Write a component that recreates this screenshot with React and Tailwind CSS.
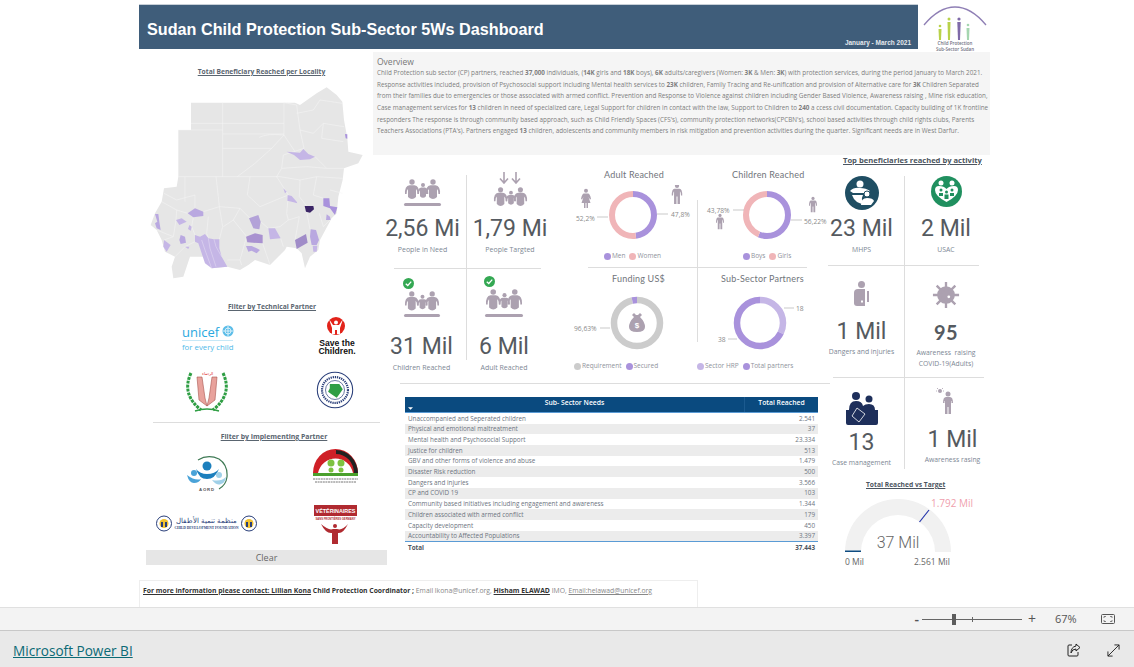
import React from "react";

const PURPLE = "#a992dc";
const LILAC = "#c5b6e6";
const PINK = "#f0b5b8";
const ICON = "#aca1b0";

const mapShapes = [
  ["#c5b6e6", "440,215 480,218 490,207 505,222 525,230 510,238 480,240 462,225"],
  ["#a992dc", "615,162 622,163 622,176 617,175"],
  ["#c5b6e6", "430,325 440,335 435,340"],
  ["#c5b6e6", "443,345 455,348 470,365 472,370 455,365 442,362"],
  ["#3b2566", "494,378 520,378 522,388 510,398 498,395"],
  ["#a992dc", "550,355 568,355 570,378 592,382 585,405 570,385 550,378"],
  ["#b9a8e0", "560,403 570,410 572,420 558,420"],
  ["#b9a8e0", "512,448 528,450 537,480 530,495 515,495 510,470"],
  ["#c5b6e6", "518,497 532,497 530,515 520,515"],
  ["#a08cc8", "465,480 498,462 503,488 470,507"],
  ["#c5b6e6", "385,445 405,445 422,475 390,478"],
  ["#b3a2d8", "327,415 355,405 362,425 358,448 340,445"],
  ["#a992d0", "318,470 345,460 368,465 368,490 322,487"],
  ["#b9a8e0", "318,498 335,498 350,505 360,510 350,520 335,512 325,515"],
  ["#b9a8e0", "165,385 190,395 190,408 160,412 143,400"],
  ["#c5b6e6", "108,420 125,415 140,425 118,435"],
  ["#c5b6e6", "148,435 155,440 152,452 144,447"],
  ["#b9a8e0", "122,465 135,470 138,488 122,492 118,480"],
  ["#c5b6e6", "165,465 180,470 195,462 205,475 222,478 238,478 238,505 245,530 262,560 215,565 195,550 180,505 175,490 165,485"],
  ["#c5b6e6", "135,500 148,500 145,507"],
  ["#c5b6e6", "72,480 92,495 80,515 70,500"],
  ["#b9a8e0", "45,402 55,402 58,425 62,450 50,445 45,430 52,425"],
];

const mapLines = [
  "M153 130H432", "M115 150H248", "M248 68V290", "M248 162H432", "M248 205H395", "M432 68V165",
  "M432 165Q380 160 358 172", "M432 165L395 205L345 250L292 290", "M115 290H420", "M135 290V365",
  "M228 290L235 350L238 380", "M432 165L465 215", "M432 68L470 75L480 150L492 205", "M470 100L520 90L540 60L607 70",
  "M480 150L520 160L550 130L612 140", "M550 130L545 175L610 185", "M492 205L430 225L425 265L410 290",
  "M525 230L560 265L612 265", "M425 265L500 260L560 265", "M410 290L445 345", "M420 290L480 300L530 290L608 295",
  "M330 290L322 345L360 380L420 355L445 345", "M480 300L478 350L500 378", "M530 290L520 345L550 355", "M570 330L608 340",
  "M72 340L110 360L165 345L165 385", "M65 365L110 390L143 400", "M110 390L108 420L100 470L72 480",
  "M190 395L238 380L300 385L330 415", "M238 380L248 440L238 478", "M205 410L200 460L205 475",
  "M160 412L155 440L165 465", "M300 385L280 420L320 470", "M280 420L250 440", "M362 425L385 445L420 440L445 420L478 410",
  "M445 345L440 400L445 420", "M478 410L465 480", "M500 395L510 448", "M422 475L430 500", "M368 490L390 555",
  "M262 540L300 540L320 470", "M300 540L305 555", "M105 530L135 500L165 485", "M50 450L100 470", "M538 400L550 440L590 400",
];

const Map = () => (
  <svg viewBox="0 0 720 660" className="block w-[240px] h-[220px]">
    <path
      fill="#e6e6e6"
      d="M153 68H465L480 75L530 40L560 22L590 45L607 65L612 120L622 175L625 215L668 225L655 250L612 265L608 300L595 350L590 400L575 415L540 480L535 510L510 530L495 565L485 520L470 505L440 500L435 510L390 555L345 540L325 555L300 570L262 560L215 565L190 530L150 530L130 590L100 595L95 560L105 530L75 515L65 480L50 450L32 435L45 400L65 365L72 325L110 320L115 290V150H153Z"
    />
    {mapLines.map((d) => (
      <path key={d} d={d} fill="none" stroke="#f6f6f6" strokeWidth="1.600" />
    ))}
    {mapShapes.map(([fill, points]) => (
      <polygon key={points} fill={fill} points={points} />
    ))}
    <path d="M205 475L210 505L228 560M185 480L195 510L215 565M222 478L228 500L245 530" fill="none" stroke="#f0ecf8" strokeWidth="1.200" />
  </svg>
);

const Person = ({ x, y, s = 1, fill = ICON }) => (
  <g transform={`translate(${x} ${y}) scale(${s})`} fill={fill}>
    <circle cx="0" cy="0" r="2.7" />
    <path d="M-7 12Q-7.5 4-2.5 3.2H2.5Q7.500 4 7 12H5.400Q5.400 8 4 7V15Q2 17 0 17Q-2 17-4 15V7Q-5.400 8-5.400 12Z" />
  </g>
);

const Group = () => (
  <g>
    <Person x={8} y={3} s={1} />
    <Person x={19} y={6} s={0.75} />
    <Person x={29} y={3} s={1} />
  </g>
);

const Check = () => (
  <svg viewBox="0 0 12 12" className="block w-[11px] h-[11px]">
    <circle cx="6" cy="6" r="6" fill="#34a853" />
    <path d="M3 6.200L5.200 8.200L9 4" fill="none" stroke="#ffffff" strokeWidth="1.400" />
  </svg>
);

const PeopleIcon = ({ bar = true, arrows = false, check = false, width = 37 }) => (
  <div className="flex flex-col items-center">
    {check && <div className="self-start -ml-[1px] mb-[2px]"><Check /></div>}
    {arrows && (
      <svg viewBox="0 0 22 12" className="block w-[22px] h-[12px] mb-[3px]">
        <path d="M5 0V10M1 6.500L5 11L9 6.500M17 0V10M13 6.500L17 11L21 6.500" fill="none" stroke={ICON} strokeWidth="1.600" />
      </svg>
    )}
    <svg viewBox="0 0 37 21" style={{ width }} className="block">
      <Group />
    </svg>
    {bar && <div className="h-[3px] mt-[3px] rounded-sm bg-[#aca1b0]" style={{ width }} />}
  </div>
);

const Kpi = ({ value, label, children, top, gap, className = "" }) => (
  <div className={`flex flex-col items-center ${className}`}>
    <div className="shrink-0 flex flex-col justify-end" style={{ height: top }}>{children}</div>
    <div className="shrink-0 font-['Roboto',sans-serif] text-[23px] leading-[30px] text-[#555a60] whitespace-nowrap" style={{ marginTop: gap }}>{value}</div>
    <div className="shrink-0 font-['Open_Sans',sans-serif] text-[7px] leading-[10px] mt-[1px] text-[#7d8794] whitespace-nowrap text-center">{label}</div>
  </div>
);

const Ring = ({ cx, cy, r, w, segments }) => {
  let start = 0;
  return (
    <g transform={`rotate(-90 ${cx} ${cy})`}>
      {segments.map(([value, color]) => {
        const el = (
          <circle
            key={color}
            cx={cx}
            cy={cy}
            r={r}
            fill="none"
            stroke={color}
            strokeWidth={w}
            pathLength="100"
            strokeDasharray={`${value} ${100 - value}`}
            strokeDashoffset={-start}
          />
        );
        start += value;
        return el;
      })}
    </g>
  );
};

const Man = ({ x, y, s = 1 }) => (
  <g transform={`translate(${x} ${y}) scale(${s})`} fill={ICON}>
    <circle cx="0" cy="1.800" r="2" />
    <path d="M-5 11Q-5 4.500-2.500 4.500H2.500Q5 4.500 5 11H3.800Q3.800 8 2.800 7V19H0.500V12H-0.500V19H-2.800V7Q-3.800 8-3.800 11Z" />
  </g>
);

const Woman = ({ x, y, s = 1 }) => (
  <g transform={`translate(${x} ${y}) scale(${s})`} fill={ICON}>
    <circle cx="0" cy="1.800" r="2" />
    <path d="M-5 10Q-4 4.500-2 4.500H2Q4 4.500 5 10L4 10.500L2.500 8L4.500 14H2V19H0.500V14H-0.500V19H-2V14H-4.500L-2.500 8L-4 10.500Z" />
  </g>
);

const Leader = ({ d }) => <path d={d} fill="none" stroke="#bbbbbb" strokeWidth="0.8" />;

const ChartLabel = ({ x, y, children, anchor = "start" }) => (
  <text x={x} y={y} textAnchor={anchor} fontSize="6.700" fill="#8a8a8a" fontFamily="'Open Sans', sans-serif">{children}</text>
);

const Legend = ({ items, pl }) => (
  <div className="flex items-center gap-[4px] font-['Open_Sans',sans-serif] text-[6.500px] leading-[10px] text-[#8f939c] whitespace-nowrap" style={{ paddingLeft: pl }}>
    {items.map(([name, color]) => (
      <span key={name} className="flex items-center gap-[1px]">
        <span className="inline-block w-[7px] h-[7px] rounded-full" style={{ background: color }} />
        {name}
      </span>
    ))}
  </div>
);

const ChartTitle = ({ children, pl }) => (
  <div className="h-[20px] flex items-center font-['Lato',sans-serif] text-[9px] tracking-[0.2px] text-[#70747a] whitespace-nowrap" style={{ paddingLeft: pl }}>{children}</div>
);

const Charts = () => (
  <div className="relative w-[263px] h-[218px] shrink-0">
    <div className="absolute left-[132px] top-[35px] w-px h-[142px] bg-[#dddddd]" />
    <div className="grid grid-cols-[132px_131px] h-[102px]">
      <div className="flex flex-col">
        <ChartTitle pl="39px">Adult Reached</ChartTitle>
        <svg viewBox="565 185 132 63" className="block w-[132px] h-[63px]">
          <Ring cx={633} cy={215} r={21} w={6} segments={[[47.8, PURPLE], [52.2, PINK]]} />
          <Woman x={586} y={189} />
          <Man x={677} y={184} s={1.050} />
          <ChartLabel x={576} y={221}>52,2%</ChartLabel>
          <ChartLabel x={671} y={217}>47,8%</ChartLabel>
          <Leader d="M597 217H608" />
          <Leader d="M657 214H668" />
        </svg>
        <div className="mt-[3px]"><Legend items={[["Men", PURPLE], ["Women", PINK]]} pl="39px" /></div>
      </div>
      <div className="flex flex-col">
        <ChartTitle pl="35px">Children Reached</ChartTitle>
        <svg viewBox="697 185 131 63" className="block w-[131px] h-[63px] overflow-visible">
          <Ring cx={767} cy={215} r={21} w={6} segments={[[56.22, PURPLE], [43.78, PINK]]} />
          <Man x={720} y={214} s={0.800} />
          <Man x={813} y={197} s={0.800} />
          <ChartLabel x={707} y={213}>43,78%</ChartLabel>
          <ChartLabel x={804} y={224}>56,22%</ChartLabel>
          <Leader d="M733 210H744" />
          <Leader d="M791 220H802" />
        </svg>
        <div className="mt-[3px]"><Legend items={[["Boys", PURPLE], ["Girls", PINK]]} pl="46px" /></div>
      </div>
    </div>
    <div className="ml-[23px] w-[219px] h-px bg-[#dddddd]" />
    <div className="grid grid-cols-[132px_131px]">
      <div className="flex flex-col pt-[1px]">
        <ChartTitle pl="47px">Funding US$</ChartTitle>
        <svg viewBox="565 288 132 70" className="block w-[132px] h-[70px]">
          <Ring cx={637} cy={322} r={23} w={6.500} segments={[[96.63, "#cccccc"], [3.37, PURPLE]]} />
          <path d="M634 312L636 314H638L640 312L642 314L640 316Q645 321 645 326Q645 331 637 331Q629 331 629 326Q629 321 634 316L632 314Z" fill={ICON} />
          <text x={637} y={327} textAnchor="middle" fontSize="8" fontWeight="700" fill="#ffffff" fontFamily="'Liberation Sans', sans-serif">$</text>
          <ChartLabel x={574} y={330}>96,63%</ChartLabel>
          <Leader d="M600 327H610" />
        </svg>
        <div className="mt-[2px]"><Legend items={[["Requirement", "#cccccc"], ["Secured", PURPLE]]} pl="9px" /></div>
      </div>
      <div className="flex flex-col pt-[1px]">
        <ChartTitle pl="24px">Sub-Sector Partners</ChartTitle>
        <svg viewBox="697 288 131 70" className="block w-[131px] h-[70px]">
          <Ring cx={760} cy={322} r={23} w={6.500} segments={[[32.14, LILAC], [67.86, PURPLE]]} />
          <ChartLabel x={796} y={310}>18</ChartLabel>
          <Leader d="M784 307H794" />
          <ChartLabel x={718} y={341}>38</ChartLabel>
          <Leader d="M728 338H737" />
        </svg>
        <div className="mt-[2px]"><Legend items={[["Sector HRP", LILAC], ["Total partners", PURPLE]]} pl="0px" /></div>
      </div>
    </div>
  </div>
);

const rows = [
  ["Unaccompanied and Seperated children", "2.541"],
  ["Physical and emotional maltreatment", "37"],
  ["Mental health and Psychosocial Support", "23.334"],
  ["Justice for children", "513"],
  ["GBV and other forms of violence and abuse", "1.479"],
  ["Disaster Risk reduction", "500"],
  ["Dangers and injuries", "3.566"],
  ["CP and COVID 19", "103"],
  ["Community based initiatives including engagement and awareness", "1.344"],
  ["Children associated with armed conflict", "179"],
  ["Capacity development", "450"],
  ["Accountability to Affected Populations", "3.397"],
];

const NeedsTable = () => (
  <div className="w-[413px] ml-[32px] mt-[13px] font-['Open_Sans',sans-serif] text-[6.300px] text-[#6d7480]">
    <div className="relative h-[16px] flex bg-[#0a4a7f] text-white font-semibold text-[6.800px] leading-[9px] border-b border-[#5a9bd5]">
      <div className="w-[339px] text-center pt-[1px]">Sub- Sector Needs</div>
      <div className="flex-1 text-center pt-[1px] border-l border-[#1b5a8f]">Total Reached</div>
      <svg viewBox="0 0 8 4" className="absolute left-[3px] bottom-[2px] w-[5px] h-[3px]"><path d="M0 0H8L4 4Z" fill="#ffffff" /></svg>
    </div>
    {rows.map(([name, total], i) => (
      <div key={name} className={`h-[10.700px] px-[3px] flex justify-between items-center whitespace-nowrap ${i % 2 ? "bg-[#ececec]" : "bg-white"}`}>
        <span>{name}</span>
        <span>{total}</span>
      </div>
    ))}
    <div className="h-[11px] px-[3px] flex justify-between items-center border-t border-[#5a9bd5] font-bold text-[#4d5560]">
      <span>Total</span>
      <span>37.443</span>
    </div>
  </div>
);

const ActivityValue = ({ children, bold }) => (
  <div className={`whitespace-nowrap text-[#555a60] ${bold ? "font-['Lato',sans-serif] text-[20px] leading-[28px] font-bold tracking-[0.4px]" : "font-['Roboto',sans-serif] text-[23px] leading-[28px]"}`}>{children}</div>
);

const ActivityLabel = ({ children }) => (
  <div className="font-['Open_Sans',sans-serif] text-[6.800px] leading-[10.500px] text-[#7d8794] whitespace-nowrap text-center">{children}</div>
);

const Activities = () => (
  <div className="w-[162px] shrink-0">
    <div className="h-[11px] mb-[10px] pl-[15px] flex items-center font-['Open_Sans',sans-serif] font-bold text-[7.600px] text-[#4c5560] underline whitespace-nowrap">Top beneficiaries reached by activity</div>
    <div className="grid grid-cols-[77px_85px] h-[89px]">
      <div className="flex flex-col items-center pr-[9px] border-r border-[#dddddd]">
        <svg viewBox="0 0 34 34" className="block w-[34px] h-[34px]">
          <circle cx="17" cy="17" r="17" fill="#1f4e63" />
          <circle cx="15" cy="8" r="3.500" fill="#ffffff" />
          <path d="M5 15Q9 11 15 12Q21 12 25 15L22 17H8ZM7 19H18Q15 25 20 28Q10 28 7 19Z" fill="#ffffff" />
          <circle cx="22" cy="18" r="3" fill="#ffffff" stroke="#1f4e63" />
          <path d="M16 29Q16 22 22 22Q28 22 29 25L26 29Z" fill="#ffffff" />
        </svg>
        <div className="mt-[5px]"><ActivityValue>23 Mil</ActivityValue></div>
        <div className="mt-[2px]"><ActivityLabel>MHPS</ActivityLabel></div>
      </div>
      <div className="flex flex-col items-center pr-[3px]">
        <svg viewBox="0 0 31 31" className="block w-[31px] h-[31px]">
          <circle cx="15.500" cy="15.500" r="15.500" fill="#20905f" />
          <circle cx="10" cy="7" r="2.500" fill="#ffffff" />
          <circle cx="21" cy="7" r="2.500" fill="#ffffff" />
          <path d="M15.500 26Q4 20 4 14Q4 10 8 10Q13 10 15.500 13Q18 10 23 10Q27 10 27 14Q27 20 15.500 26Z" fill="#ffffff" />
          <circle cx="10" cy="14" r="1.500" fill="#20905f" />
          <circle cx="15.500" cy="16" r="1.500" fill="#20905f" />
          <circle cx="21" cy="14" r="1.500" fill="#20905f" />
          <path d="M8 17H12V20H8ZM13.500 18.500H17.500V23H13.500ZM19 17H23V20H19Z" fill="#20905f" />
        </svg>
        <div className="mt-[8px]"><ActivityValue>2 Mil</ActivityValue></div>
        <div className="mt-[2px]"><ActivityLabel>USAC</ActivityLabel></div>
      </div>
    </div>
    <div className="w-[151px] h-px bg-[#dddddd]" />
    <div className="grid grid-cols-[77px_85px] h-[111px]">
      <div className="flex flex-col items-center pr-[9px] border-r border-[#dddddd] pt-[15px]">
        <svg viewBox="0 0 16 26" className="block w-[16px] h-[26px]">
          <circle cx="7.500" cy="3.500" r="3.500" fill={ICON} />
          <path d="M0 12Q0 8 4 8H11V25H3Q0 25 0 22Z" fill={ICON} />
          <path d="M13 10H15V21H13ZM6 19Q6 17 8 17V15H9V22H6Z" fill={ICON} />
          <path d="M7 19.500H9V21.500H7Z" fill="#ffffff" />
        </svg>
        <div className="mt-[11px]"><ActivityValue>1 Mil</ActivityValue></div>
        <div className="mt-[1px]"><ActivityLabel>Dangers and injuries</ActivityLabel></div>
      </div>
      <div className="flex flex-col items-center pr-[3px] pt-[15px]">
        <svg viewBox="0 0 30 30" className="block w-[28px] h-[28px]">
          <circle cx="15" cy="15" r="9.500" fill={ICON} />
          <path d="M15 1V29M1 15H29M5 5L25 25M25 5L5 25" stroke={ICON} strokeWidth="2.500" />
          <circle cx="18" cy="17" r="1.500" fill="#ffffff" />
        </svg>
        <div className="mt-[9px]"><ActivityValue bold>95</ActivityValue></div>
        <div className="mt-[2px]"><ActivityLabel>Awareness&nbsp; raising<br />COVID-19(Adults)</ActivityLabel></div>
      </div>
    </div>
    <div className="ml-[5px] w-[151px] h-px bg-[#dddddd]" />
    <div className="grid grid-cols-[77px_85px] h-[85px]">
      <div className="flex flex-col items-center pr-[9px] border-r border-[#dddddd] pt-[14px]">
        <svg viewBox="0 0 34 33" className="block w-[34px] h-[33px]">
          <circle cx="11" cy="4" r="4" fill="#1e2f5b" />
          <circle cx="24" cy="7" r="3.500" fill="#1e2f5b" />
          <path d="M4 18Q4 9 11 9Q17 9 18 14Q20 12 24 12Q30 12 30 18H33V31Q33 33 31 33H3Q1 33 1 31V18Z" fill="#1e2f5b" />
          <path d="M12 16L20 22L14 30L7 24Z" fill="none" stroke="#ffffff" strokeWidth="0.800" />
        </svg>
        <div className="mt-[4px]"><ActivityValue>13</ActivityValue></div>
        <div className="mt-[1px]"><ActivityLabel>Case management</ActivityLabel></div>
      </div>
      <div className="flex flex-col items-center pl-[10px] pt-[10px]">
        <svg viewBox="0 0 20 26" className="block w-[20px] h-[26px] -ml-[14px]">
          <circle cx="4" cy="3" r="2" fill={ICON} />
          <path d="M4 0V-2M0 3H1M7 3H8M1 0L2 1M7 0L6 1" stroke={ICON} strokeWidth="0.800" />
          <circle cx="12" cy="6" r="2.500" fill={ICON} />
          <path d="M7 15Q7 9 10 9H14Q17 9 17 15H15.500V13H15V26H12.500V19H11.500V26H9V13H8.500V15Z" fill={ICON} />
        </svg>
        <div className="mt-[12px]"><ActivityValue>1 Mil</ActivityValue></div>
        <div className="mt-[1px]"><ActivityLabel>Awareness rasing</ActivityLabel></div>
      </div>
    </div>
    <div className="pl-[38px] mt-[16px] font-['Open_Sans',sans-serif] font-bold text-[6.700px] leading-[12px] text-[#4c5560] underline whitespace-nowrap">Total Reached vs Target</div>
    <svg viewBox="838 492 150 80" className="block ml-[10px] w-[150px] h-[80px] mt-[1px]">
      <path d="M845 552A53 53 0 0 1 951 552H935A37 37 0 0 0 861 552Z" fill="#f1f1f1" />
      <path d="M845 550.500H861V552H845Z" fill="#0f4c81" />
      <path d="M919.500 522L929 510" stroke="#2233aa" strokeWidth="1.200" />
      <text x="931" y="507" fontSize="10" fill="#ef9fae" fontFamily="'Open Sans', sans-serif">1.792 Mil</text>
      <text x="898" y="548" textAnchor="middle" fontSize="16" fontWeight="300" fill="#666666" fontFamily="Roboto, sans-serif">37 Mil</text>
      <text x="845" y="565" fontSize="8.500" fill="#666666" fontFamily="'Open Sans', sans-serif">0 Mil</text>
      <text x="914" y="565" fontSize="8.500" fill="#666666" fontFamily="'Open Sans', sans-serif">2.561 Mil</text>
    </svg>
  </div>
);

const Overview = () => (
  <div className="h-[103px] mt-[3px] bg-[#f5f5f5] pl-[4px] pt-[4px] font-['Open_Sans',sans-serif] text-[#7d7d7d] whitespace-nowrap">
    <div className="text-[8.500px] leading-[11px] text-[#777777]">Overview</div>
    <div className="text-[6.320px] leading-[11.650px]">
      <div>Child Protection sub sector (CP) partners, reached <b>37,000</b> individuals, (<b>14K</b> girls and <b>18K</b> boys), <b>6K</b> adults/caregivers (Women: <b>3K</b> &amp; Men: <b>3K</b>)  with protection services, during the period January to March 2021.</div>
      <div>Response activities included, provision of Psychosocial support including Mental health services to <b>23K</b>  children, Family Tracing and Re-unification and provision of Alternative care for <b>3K</b> Children Separated</div>
      <div>from their families due to emergencies or those associated with armed conflict. Prevention and Response to Violence against children including Gender Based Violence, Awareness raising , Mine risk education,</div>
      <div>Case management services for <b>13</b>  children in need of specialized care, Legal Support for children in contact with the law, Support to Children to <b>240</b> a ccess civil documentation. Capacity building of 1K frontline</div>
      <div>responders The response is through community based approach, such as Child Friendly Spaces (CFS's), community protection networks(CPCBN's), school based activities through child rights clubs, Parents</div>
      <div>Teachers Associations (PTA's). Partners engaged <b>13</b> children, adolescents and community members in risk mitigation and prevention activities during the quarter. Significant needs are in West Darfur.</div>
    </div>
  </div>
);

const SectorLogo = () => (
  <svg viewBox="0 0 72 48" className="block w-[72px] h-[48px] shrink-0">
    <path d="M5 21Q20 3 36 3Q52 3 67 21" fill="none" stroke="#8f7fb5" strokeWidth="1.300" />
    <circle cx="21" cy="22" r="1.300" fill="#b9d24a" />
    <path d="M19.500 25H22.500L22 36H20Z" fill="#b9d24a" />
    <circle cx="30" cy="15" r="1.500" fill="#b9d24a" />
    <path d="M28.500 18H31.500L31 36H29Z" fill="#b9d24a" />
    <circle cx="40" cy="15" r="1.600" fill="#7f6aa8" />
    <path d="M38.300 18H41.700L41 36H39Z" fill="#7f6aa8" />
    <circle cx="49" cy="21" r="1.300" fill="#a5d6b0" />
    <path d="M47.500 24H50.500L50 36H48Z" fill="#a5d6b0" />
    <text x="36" y="41" textAnchor="middle" fontSize="4.500" fontWeight="600" fill="#6f6f7f" fontFamily="'Open Sans', sans-serif">Child Protection</text>
    <text x="36" y="47" textAnchor="middle" fontSize="4.500" fontWeight="600" fill="#6f6f7f" fontFamily="'Open Sans', sans-serif">Sub-Sector Sudan</text>
  </svg>
);

const Unicef = () => (
  <svg viewBox="183 325 52 27" className="block w-[52px] h-[27px] overflow-visible">
    <text x="183" y="337" fontSize="13" fill="#2aa9e0" fontFamily="'Open Sans', sans-serif">unicef</text>
    <circle cx="229" cy="331" r="5.500" fill="#5cbde8" />
    <path d="M224 331H234M229 326V336" stroke="#ffffff" strokeWidth="0.700" />
    <circle cx="229" cy="331" r="3" fill="none" stroke="#ffffff" strokeWidth="0.700" />
    <path d="M183 340.500H234" stroke="#9fd8f2" strokeWidth="0.600" />
    <text x="183" y="350" fontSize="7.800" fill="#4fb9e8" fontFamily="'Open Sans', sans-serif">for every child</text>
  </svg>
);

const SaveChildren = () => (
  <svg viewBox="316 317 42 39" className="block w-[42px] h-[39px] overflow-visible">
    <circle cx="336" cy="326" r="9" fill="#e2231a" />
    <circle cx="336" cy="322.500" r="2" fill="#ffffff" />
    <path d="M329 319L333 325H339L343 319L340 328V334H337V330H335V334H332V328Z" fill="#ffffff" />
    <text x="337" y="346" textAnchor="middle" fontSize="8.600" fontWeight="700" fill="#111111" fontFamily="'Liberation Sans', sans-serif">Save the</text>
    <text x="337" y="354" textAnchor="middle" fontSize="8.600" fontWeight="700" fill="#111111" fontFamily="'Liberation Sans', sans-serif">Children.</text>
  </svg>
);

const Hands = () => (
  <svg viewBox="0 0 44 44" className="block w-[44px] h-[44px]">
    <path d="M6 3Q-4 24 16 40M38 3Q48 24 28 40" fill="none" stroke="#2f9e44" strokeWidth="3" strokeDasharray="3 1" />
    <path d="M12 7H17L20 28L22 36L14 30ZM32 7H27L24 28L22 36L30 30Z" fill="#e8a29c" stroke="#a8554f" strokeWidth="0.600" />
    <text x="22" y="5" textAnchor="middle" fontSize="4" fill="#d33" fontFamily="'Noto Sans', sans-serif">الرحماء</text>
    <path d="M10 41Q22 37 34 41" stroke="#2f9e44" strokeWidth="1.500" fill="none" />
  </svg>
);

const Seal = () => (
  <svg viewBox="0 0 44 44" className="block w-[38px] h-[44px]">
    <circle cx="22" cy="22" r="20.500" fill="#ffffff" stroke="#2a3f7a" strokeWidth="1.200" />
    <circle cx="22" cy="22" r="15" fill="none" stroke="#2a3f7a" strokeWidth="2.500" strokeDasharray="1.500 1" />
    <circle cx="22" cy="22" r="11" fill="#ffffff" stroke="#2a3f7a" strokeWidth="0.800" />
    <path d="M16 15H27L31 21L27 27L24 31L18 27L14 24L16 20Z" fill="#2f9e44" />
  </svg>
);

const Aord = () => (
  <svg viewBox="0 0 42 37" className="block w-[42px] h-[37px]">
    <path d="M11 5Q21 -1 32 4Q41 10 40 22Q39 30 32 34" fill="none" stroke="#3f7a55" strokeWidth="1.200" />
    <circle cx="20" cy="11" r="4.500" fill="#1c7fbd" />
    <path d="M9 14Q12 24 20 24Q28 24 32 14Q28 19 20 19Q13 19 9 14Z" fill="#1c7fbd" />
    <circle cx="7" cy="18" r="3" fill="#4aa3d8" />
    <path d="M0 20Q2 28 7 28Q12 28 14 24Q8 26 0 20Z" fill="#4aa3d8" />
    <circle cx="32" cy="20" r="3" fill="#9fd0e8" />
    <path d="M25 25Q30 31 34 29Q38 28 39 22Q34 27 25 25Z" fill="#9fd0e8" />
    <text x="20" y="36" textAnchor="middle" fontSize="4.300" fontWeight="700" letterSpacing="0.800" fill="#555555" fontFamily="'Liberation Sans', sans-serif">AORD</text>
  </svg>
);

const Arch = () => (
  <svg viewBox="0 0 47 36" className="block w-[47px] h-[36px]">
    <path d="M1 25A22.500 24 0 0 1 46 25H41A18 19 0 0 0 6 25Z" fill="#cf2027" />
    <path d="M24 2A22.500 24 0 0 1 46 25H42A18 19 0 0 0 24 6Z" fill="#222222" />
    <path d="M1 25H46V28H1Z" fill="#4aa02c" />
    <circle cx="19" cy="15" r="3.500" fill="#7fc241" />
    <circle cx="29" cy="15" r="3.500" fill="#7fc241" />
    <circle cx="19" cy="22" r="2.500" fill="#7fc241" />
    <circle cx="29" cy="22" r="2.500" fill="#7fc241" />
    <path d="M1 31H46M3 34H44" stroke="#777777" strokeWidth="1" strokeDasharray="2 0.600" />
  </svg>
);

const Cdf = () => (
  <svg viewBox="0 0 101 17" className="block w-[101px] h-[17px]">
    {[8, 93].map((cx) => (
      <g key={cx}>
        <circle cx={cx} cy="8.500" r="7.500" fill="#ffffff" stroke="#2a3f7a" strokeWidth="1" />
        <circle cx={cx} cy="8.500" r="4.500" fill="#f2c230" />
        <path d={`M${cx - 3} 12V7H${cx - 1}V12ZM${cx + 1} 12V7H${cx + 3}V12Z`} fill="#2a3f7a" />
      </g>
    ))}
    <text x="50.500" y="8" textAnchor="middle" fontSize="6.500" fill="#2a3f7a" fontFamily="'Noto Sans', sans-serif">منظمة تنمية الأطفال</text>
    <text x="50.500" y="13.500" textAnchor="middle" fontSize="3.500" fontWeight="700" fill="#2a3f7a" fontFamily="'Liberation Serif', serif">CHILD DEVELOPMENT FOUNDATION</text>
  </svg>
);

const Vet = () => (
  <svg viewBox="0 0 43 40" className="block w-[43px] h-[40px]">
    <rect x="0" y="0" width="43" height="11" fill="#b02a30" />
    <text x="21.500" y="8" textAnchor="middle" fontSize="5.400" fontWeight="700" fill="#ffffff" fontFamily="'Liberation Sans', sans-serif">VÉTÉRINAIRES</text>
    <text x="21.500" y="15" textAnchor="middle" fontSize="2.700" fontWeight="700" fill="#b02a30" fontFamily="'Liberation Sans', sans-serif">SANS FRONTIÈRES GERMANY</text>
    <circle cx="21" cy="21" r="2" fill="#b02a30" />
    <path d="M7 19Q15 26 19 24H23Q28 26 34 19Q29 29 24 28V39H18V28Q12 29 7 19Z" fill="#b02a30" />
  </svg>
);

const SectionTitle = ({ children, className = "" }) => (
  <div className={`font-['Open_Sans',sans-serif] font-bold leading-[10px] text-[#5a6570] underline whitespace-nowrap text-center ${className}`}>{children}</div>
);

const LeftColumn = () => (
  <div className="w-[234px] shrink-0 flex flex-col">
    <SectionTitle className="mt-[18px] pl-[11px] text-[6.700px]">Total Beneficiary Reached per Locality</SectionTitle>
    <div className="mt-[3px] ml-px h-[220px]"><Map /></div>
    <SectionTitle className="mt-[2px] pl-[32px] text-[6.700px]">Filter by Technical Partner</SectionTitle>
    <div className="mt-[5px] h-[103px] grid grid-cols-[119px_115px] grid-rows-[51px_52px]">
      <div className="flex justify-center pl-[19px] pt-[8px] items-start"><Unicef /></div>
      <div className="flex justify-center items-start pl-[43px]"><SaveChildren /></div>
      <div className="flex justify-center items-start pl-[17px] pt-[2px]"><Hands /></div>
      <div className="flex justify-center items-start pl-[39px]"><Seal /></div>
    </div>
    <div className="ml-[14px] w-[227px] h-px bg-[#dddddd] mt-[2px]" />
    <SectionTitle className="mt-[9px] pl-[36px] text-[6.900px]">Filter by Implementing Partner</SectionTitle>
    <div className="mt-[6px] grid grid-cols-[119px_115px] grid-rows-[57px_44px]">
      <div className="flex justify-center items-start pl-[18px] pt-[7px]"><Aord /></div>
      <div className="flex justify-center items-start pl-[39px]"><Arch /></div>
      <div className="flex justify-start items-start pl-[17px] pt-[10px]"><Cdf /></div>
      <div className="flex justify-center items-start pl-[39px]"><Vet /></div>
    </div>
    <div className="ml-[7px] w-[241px] h-[15px] mt-[1px] bg-[#e6e6e6] flex items-center justify-center font-['Open_Sans',sans-serif] text-[9px] text-[#666666]">Clear</div>
  </div>
);

const ZoomBar = () => (
  <div className="h-[24px] shrink-0 bg-[#f3f3f3] border-t border-[#e0e0e0] border-b border-b-[#c8c8c8] flex items-center justify-end text-[#555555] font-['Open_Sans',sans-serif]">
    <span className="text-[14px] font-semibold leading-none mr-[3px]">-</span>
    <div className="relative w-[100px] h-px bg-[#666666]">
      <div className="absolute left-[30px] -top-[5px] w-[4px] h-[11px] bg-[#5c5c5c]" />
      <div className="absolute left-[50px] -top-[2px] w-px h-[5px] bg-[#666666]" />
    </div>
    <span className="text-[14px] leading-none ml-[6px] w-[14px]">+</span>
    <span className="text-[11px] ml-[13px] w-[26px]">67%</span>
    <svg viewBox="0 0 14 10" className="w-[14px] h-[10px] ml-[20px] mr-[19px]">
      <rect x="0.500" y="0.500" width="13" height="9" rx="1" fill="none" stroke="#555555" />
      <path d="M3 4V2.500H5M9 2.500H11V4M11 6V7.500H9M5 7.500H3V6" fill="none" stroke="#555555" strokeWidth="0.700" />
    </svg>
  </div>
);

const BottomBar = () => (
  <div className="flex-1 bg-[#e9e9e9] flex items-center justify-between pl-[13px] pr-[14px]">
    <a href="#" className="font-['Open_Sans',sans-serif] text-[13.600px] leading-[18px] mt-[4px] text-[#0b6a75] underline">Microsoft Power BI</a>
    <div className="flex items-center gap-[26px] mt-[2px]">
      <svg viewBox="0 0 14 14" className="w-[14px] h-[14px]">
        <path d="M5 2H2Q1 2 1 3V12Q1 13 2 13H10Q11 13 11 12V9" fill="none" stroke="#222222" strokeWidth="1" />
        <path d="M9 1L13 4.500L9 8V6Q5 6 4 10Q4 4 9 3Z" fill="none" stroke="#222222" strokeWidth="1" />
      </svg>
      <svg viewBox="0 0 14 14" className="w-[13px] h-[13px]">
        <path d="M1 13L13 1M8 1H13V6M1 8V13H6" fill="none" stroke="#222222" strokeWidth="1" />
      </svg>
    </div>
  </div>
);

const App = () => (
  <div className="h-[667px] w-[1134px] flex flex-col bg-white overflow-hidden">
    <div className="h-[607px] shrink-0 pl-[139px] pt-[4px] overflow-hidden">
      <div className="w-[851px] h-[45px] flex">
        <div className="w-[779px] shrink-0 bg-[#3f5d7a] border-t border-[#c8d0d8] relative font-['Liberation_Sans',sans-serif] text-white">
          <div className="pl-[8px] pt-[13px] text-[16.200px] leading-[22px] font-bold whitespace-nowrap">Sudan Child Protection Sub-Sector 5Ws Dashboard</div>
          <div className="absolute right-[7px] bottom-[1px] text-[6.500px] leading-[10px] font-bold text-[#e4e9ee] whitespace-nowrap">January - March 2021</div>
        </div>
        <div className="ml-px"><SectorLogo /></div>
      </div>
      <div className="flex w-[851px]">
        <LeftColumn />
        <div className="flex-1 flex flex-col">
          <Overview />
          <div className="flex">
            <div className="w-[455px] shrink-0 flex flex-col">
              <div className="flex h-[228px]">
                <div className="w-[192px] shrink-0 pt-[20px]">
                  <div className="grid grid-cols-[94px_74px] grid-rows-[93px_1px_91px]">
                    <Kpi value="2,56 Mi" label="People in Need" top={31} gap={8} className="border-r border-[#dddddd] pl-[6px]">
                      <PeopleIcon />
                    </Kpi>
                    <Kpi value="1,79 Mi" label="People Targted" top={32} gap={7} className="pl-[12px]">
                      <PeopleIcon bar={false} arrows width={35} />
                    </Kpi>
                    <div className="col-span-2 ml-[21px] w-[147px] h-px bg-[#dddddd]" />
                    <Kpi value="31 Mil" label="Children Reached" top={48} gap={15} className="border-r border-[#dddddd] pl-[4px]">
                      <PeopleIcon check width={36} />
                    </Kpi>
                    <Kpi value="6 Mil" label="Adult Reached" top={48} gap={15}>
                      <PeopleIcon check width={38} />
                    </Kpi>
                  </div>
                </div>
                <div className="pt-[10px]"><Charts /></div>
              </div>
              <div className="ml-[27px] w-[430px] h-px bg-[#dddddd]" />
              <NeedsTable />
            </div>
            <Activities />
          </div>
        </div>
      </div>
      <div className="w-[559px] mt-[8px] border border-[#eeeeee] h-[28px] pl-[3px] pt-[5px] font-['Open_Sans',sans-serif] text-[6.800px] leading-[10px] text-[#888888] whitespace-nowrap">
        <b className="text-[#333333]"><u>For more information please contact: Lillian Kona</u> Child Protection Coordinator ;</b> Email lkona@unicef.org, <b className="text-[#333333]"><u>Hisham ELAWAD</u></b> IMO, <u>Email:helawad@unicef.org</u>
      </div>
    </div>
    <ZoomBar />
    <BottomBar />
  </div>
);

export default App;
